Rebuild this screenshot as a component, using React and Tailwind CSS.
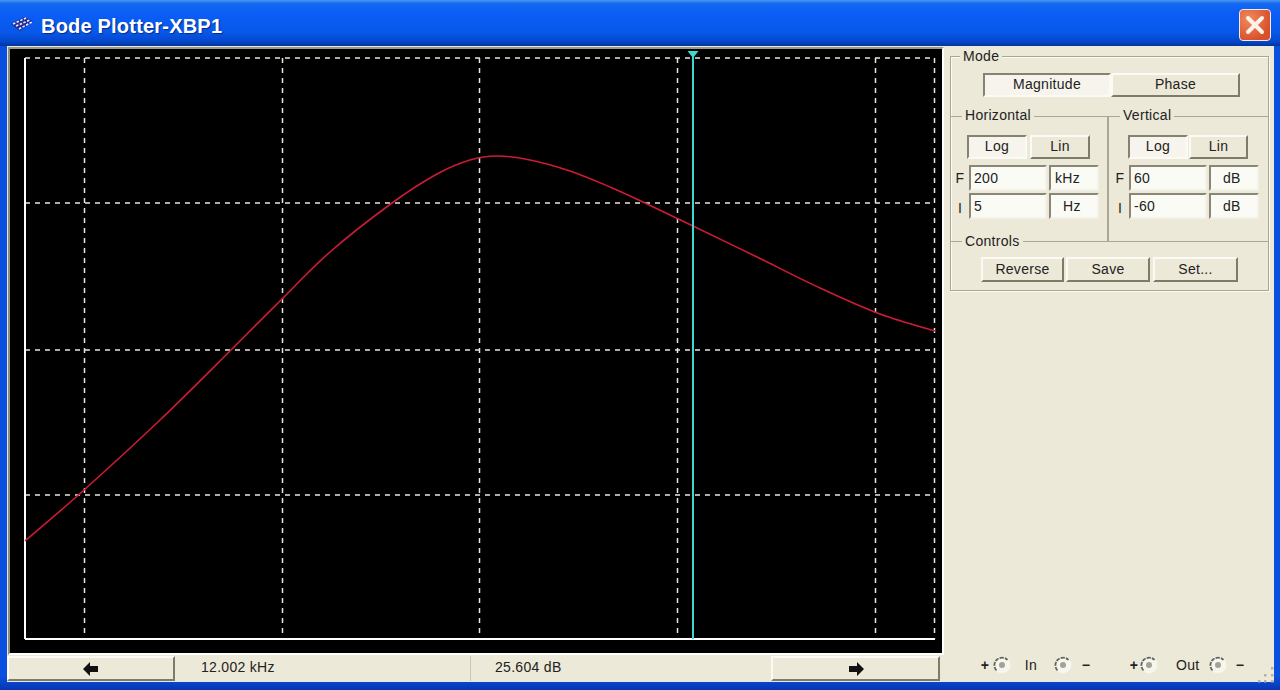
import React from 'react';

const raised = 'flex items-center justify-center bg-[#ece9d8] border-2 border-t-[#fbfaf5] border-l-[#fbfaf5] border-r-[#7f7b69] border-b-[#7f7b69] text-[14px] text-[#222]';
const pressed = 'flex items-center justify-center bg-[#f6f4ec] border-2 border-t-[#85826f] border-l-[#85826f] border-r-[#fbfaf5] border-b-[#fbfaf5] text-[14px] text-[#222]';
const field = 'flex items-center bg-[#fbfbf6] border-2 border-t-[#8a8776] border-l-[#8a8776] border-r-[#f4f2e8] border-b-[#f4f2e8] text-[14px] text-[#222] h-full';

const curvePoints = [
  [25, 541], [84, 490], [160, 420], [232, 349], [282, 299], [330, 252], [392, 203], [437, 174],
  [470, 160], [497, 156], [530, 160], [570, 171], [610, 187], [645, 203], [693, 226], [757, 257],
  [820, 288], [880, 314], [935, 331],
];

// catmull-rom through the read-off points so the trace has no kinks
function smoothPath(pts) {
  let d = `M${pts[0][0]} ${pts[0][1]}`;
  for (let i = 0; i < pts.length - 1; i++) {
    const p0 = pts[Math.max(i - 1, 0)];
    const p1 = pts[i];
    const p2 = pts[i + 1];
    const p3 = pts[Math.min(i + 2, pts.length - 1)];
    const c1x = p1[0] + (p2[0] - p0[0]) / 6;
    const c1y = p1[1] + (p2[1] - p0[1]) / 6;
    const c2x = p2[0] - (p3[0] - p1[0]) / 6;
    const c2y = p2[1] - (p3[1] - p1[1]) / 6;
    d += ` C${c1x} ${c1y} ${c2x} ${c2y} ${p2[0]} ${p2[1]}`;
  }
  return d;
}

function Plot() {
  return (
    <div className="ml-[1px] mt-[1px] h-[608px] bg-black border-2 border-t-[#9c9a8a] border-l-[#8f8d7e] border-r-white border-b-white">
      <svg viewBox="10 49 932 604" className="block w-full h-full">
        {[84.5, 282.5, 479.5, 677.5, 875.5].map((x) => (
          <line key={x} x1={x} x2={x} y1="58" y2="639" stroke="#e8e8e0" strokeWidth="1.5" strokeDasharray="5 5" />
        ))}
        {[203, 350, 495].map((y) => (
          <line key={y} x1="25" x2="935" y1={y} y2={y} stroke="#e8e8e0" strokeWidth="1.5" strokeDasharray="5 5" />
        ))}
        <line x1="25" x2="935" y1="58" y2="58" stroke="#e8e8e0" strokeWidth="1.5" strokeDasharray="5 5" />
        <line x1="934.5" x2="934.5" y1="58" y2="639" stroke="#e8e8e0" strokeWidth="1.5" strokeDasharray="5 5" />
        <line x1="25" x2="25" y1="58" y2="639" stroke="#fff" strokeWidth="2" />
        <line x1="25" x2="935" y1="639" y2="639" stroke="#fff" strokeWidth="2" />
        <path d={smoothPath(curvePoints)} fill="none" stroke="#cc1c34" strokeWidth="1.6" />
        <line x1="693" x2="693" y1="54" y2="639" stroke="#3fd8d0" strokeWidth="2" />
        <polygon points="687.5,51 698.5,51 693,58" fill="#3fd8d0" />
      </svg>
    </div>
  );
}

function Arrow({ flip }) {
  return (
    <svg width="16" height="14" viewBox="0 0 16 14" className={flip ? 'rotate-180' : ''}>
      <polygon points="0,7 7,0 7,4 15,4 15,10 7,10 7,14" fill="#111" />
    </svg>
  );
}

function Terminal() {
  return (
    <svg width="18" height="18" viewBox="0 0 18 18" className="shrink-0">
      <circle cx="9" cy="9" r="8.5" fill="#f6f5ee" />
      <path d="M3.5 14.5 A7 7 0 0 1 14.5 4" fill="none" stroke="#66655a" strokeWidth="1.8" strokeDasharray="4 1" />
      <circle cx="9" cy="9" r="3" fill="#a3a297" />
    </svg>
  );
}

function Legend({ children, left, top = '-top-[9px]' }) {
  return (
    <span className={`absolute ${top} ${left} bg-[#ece9d8] px-[3px] text-[14px] leading-[16px] text-[#222]`}>
      {children}
    </span>
  );
}

function Row({ label, value, unit, mt, unitRight, labelPos }) {
  return (
    <div className={`flex h-[26px] ${mt}`}>
      <span className={`flex justify-center text-[14px] text-[#222] w-[18px] shrink-0 ${labelPos}`}>{label}</span>
      <div className={`${field} w-[78px] pl-[3px]`}>{value}</div>
      <div className={`${field} w-[50px] ml-[2px] ${unitRight}`}>{unit}</div>
    </div>
  );
}

export default function App() {
  return (
    <div className="relative w-[1280px] h-[690px] flex flex-col overflow-hidden bg-[linear-gradient(#0a50e0_98%,#0836b0_100%)] tracking-[0.3px] font-['Liberation_Sans',Arial,sans-serif]">
      {/* title bar */}
      <div className="h-[46px] shrink-0 flex items-center bg-[linear-gradient(#4a97f4_0%,#1468f0_8%,#0a5df6_30%,#0758ea_70%,#0448cc_90%,#02349c_100%)]">
        <svg width="24" height="16" viewBox="0 0 24 16" className="ml-[10px] mt-[2px]">
          <polygon points="1,8 14,1 23,5 10,15" fill="#1c2f9c" />
          <g stroke="#f6e9f2" strokeWidth="1.6" strokeDasharray="2.5 1.5">
            <line x1="3" y1="8" x2="16" y2="2" />
            <line x1="6" y1="10" x2="20" y2="4" />
            <line x1="9" y1="13" x2="22" y2="6" />
          </g>
        </svg>
        <span className="ml-[7px] mt-[6px] text-white font-bold text-[20px] tracking-[0.2px] [text-shadow:1px_1px_1px_#0a2a90]">Bode Plotter-XBP1</span>
        <div className="ml-auto mr-[9px] mt-[4px] w-[32px] h-[32px] rounded-[4px] border border-[#f0ece4] bg-[radial-gradient(circle_at_30%_30%,#ef8a5e,#d94f2a_75%)] flex items-center justify-center">
          <svg width="22" height="22" viewBox="0 0 22 22">
            <path d="M4 4 L18 18 M18 4 L4 18" stroke="#fdf3ea" strokeWidth="4" strokeLinecap="round" />
          </svg>
        </div>
      </div>

      {/* window body */}
      <div className="flex-1 flex ml-[7px] mr-[6px] mb-[8px] bg-[#ece9d8] border-b border-[#dcebf6]">
        <div className="w-[937px] shrink-0 flex flex-col">
          <Plot />
          <div className="mt-[1px] flex h-[25px] text-[14px] text-[#222]">
            <div className={`${raised} w-[168px]`}><Arrow /></div>
            <div className="w-[296px] flex items-center pl-[26px] pb-[3px] border-r border-[#c9c6b4]">12.002 kHz</div>
            <div className="w-[300px] flex items-center pl-[24px] pb-[3px]">25.604 dB</div>
            <div className={`${raised} w-[169px]`}><Arrow flip /></div>
          </div>
        </div>

        {/* control panel */}
        <div className="flex-1 flex flex-col ml-[6px]">
          <div className="mt-[10px] w-[319px] h-[235px] flex flex-col border border-[#a9a795] shadow-[inset_1px_1px_0_#fbfaf5,1px_1px_0_#fbfaf5]">
            <div className="relative h-[59px] pl-[32px] pt-[16px] flex">
              <Legend left="left-[9px]">Mode</Legend>
              <div className={`${pressed} w-[128px] h-[24px] pb-[2px]`}>Magnitude</div>
              <div className={`${raised} w-[129px] h-[24px] pb-[2px]`}>Phase</div>
            </div>
            <div className="flex h-[126px] border-y border-[#a9a795]">
              <div className="relative w-[158px] border-r-2 border-[#a9a795] pt-[18px]">
                <Legend left="left-[11px]" top="-top-[10px]">Horizontal</Legend>
                <div className="flex pl-[16px]">
                  <div className={`${pressed} w-[60px] h-[24px] pb-[1px]`}>Log</div>
                  <div className={`${raised} w-[60px] h-[24px] ml-[3px] pb-[1px]`}>Lin</div>
                </div>
                <Row label="F" value="200" unit="kHz" mt="mt-[6px]" unitRight="pl-[4px]" labelPos="items-center" />
                <Row label="I" value="5" unit="Hz" mt="mt-[2px]" unitRight="pl-[12px]" labelPos="items-end" />
              </div>
              <div className="relative flex-1 pt-[18px] pl-[2px]">
                <Legend left="left-[11px]" top="-top-[10px]">Vertical</Legend>
                <div className="flex pl-[17px]">
                  <div className={`${pressed} w-[60px] h-[24px] pb-[1px]`}>Log</div>
                  <div className={`${raised} w-[59px] h-[24px] ml-[1px] pb-[1px]`}>Lin</div>
                </div>
                <Row label="F" value="60" unit="dB" mt="mt-[6px]" unitRight="pl-[12px]" labelPos="items-center" />
                <Row label="I" value="-60" unit="dB" mt="mt-[2px]" unitRight="pl-[12px]" labelPos="items-end" />
              </div>
            </div>
            <div className="relative flex-1 pl-[30px] pt-[15px] flex">
              <Legend left="left-[11px]">Controls</Legend>
              <div className={`${raised} w-[83px] h-[25px]`}>Reverse</div>
              <div className={`${raised} w-[84px] h-[25px] ml-[2px]`}>Save</div>
              <div className={`${raised} w-[85px] h-[25px] ml-[3px]`}>Set...</div>
            </div>
          </div>

          {/* input and output terminals */}
          <div className="mt-auto mb-[6px] pl-[30px] flex items-center h-[20px] text-[14px] text-[#222]">
            <span className="w-[10px] text-center font-bold">+</span>
            <span className="ml-[3px]"><Terminal /></span>
            <span className="w-[36px] text-center pl-[4px]">In</span>
            <span className="ml-[7px]"><Terminal /></span>
            <span className="w-[10px] ml-[9px] text-center font-bold">−</span>
            <span className="w-[10px] ml-[38px] text-center font-bold">+</span>
            <span className="ml-[1px]"><Terminal /></span>
            <span className="w-[51px] pl-[18px]">Out</span>
            <span><Terminal /></span>
            <span className="w-[10px] ml-[8px] text-center font-bold">−</span>
          </div>
        </div>
      </div>

      {/* resize grip */}
      <svg width="18" height="18" viewBox="0 0 18 18" className="absolute left-[1256px] top-[665px]">
        {[[15, 2], [8, 9], [15, 9], [2, 15], [8, 15], [15, 15]].map(([x, y]) => (
          <rect key={`${x}-${y}`} x={x} y={y} width="2.5" height="2.5" fill="#b5b29f" />
        ))}
      </svg>
    </div>
  );
}
